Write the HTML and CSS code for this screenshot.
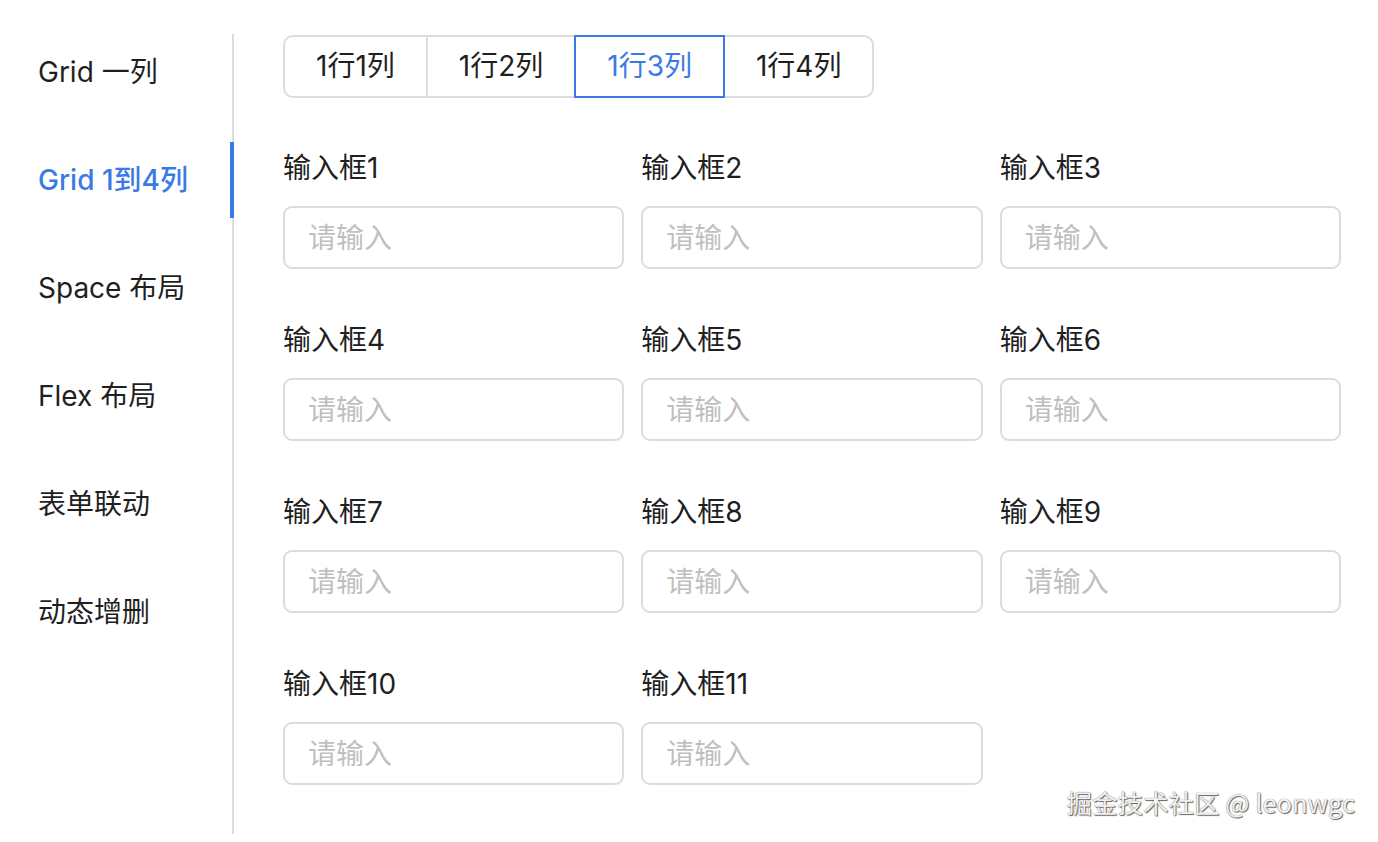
FILE: index.html
```html
<!DOCTYPE html>
<html lang="zh">
<head>
<meta charset="utf-8">
<title>Grid 1到4列</title>
<link rel="stylesheet" href="styles.css">
</head>
<body>
<div class="page">
  <nav class="sidebar">
    <div class="nav-item">Grid 一列</div>
    <div class="nav-item active">Grid 1到4列</div>
    <div class="nav-item">Space 布局</div>
    <div class="nav-item">Flex 布局</div>
    <div class="nav-item">表单联动</div>
    <div class="nav-item">动态增删</div>
  </nav>
  <main class="content">
    <div class="segmented">
      <div class="seg-btn">1行1列</div>
      <div class="seg-btn">1行2列</div>
      <div class="seg-btn active">1行3列</div>
      <div class="seg-btn">1行4列</div>
    </div>
    <div class="form-grid">
      <div class="field"><div class="label">输入框1</div><input class="input" placeholder="请输入"></div>
      <div class="field"><div class="label">输入框2</div><input class="input" placeholder="请输入"></div>
      <div class="field"><div class="label">输入框3</div><input class="input" placeholder="请输入"></div>
      <div class="field"><div class="label">输入框4</div><input class="input" placeholder="请输入"></div>
      <div class="field"><div class="label">输入框5</div><input class="input" placeholder="请输入"></div>
      <div class="field"><div class="label">输入框6</div><input class="input" placeholder="请输入"></div>
      <div class="field"><div class="label">输入框7</div><input class="input" placeholder="请输入"></div>
      <div class="field"><div class="label">输入框8</div><input class="input" placeholder="请输入"></div>
      <div class="field"><div class="label">输入框9</div><input class="input" placeholder="请输入"></div>
      <div class="field"><div class="label">输入框10</div><input class="input" placeholder="请输入"></div>
      <div class="field"><div class="label">输入框11</div><input class="input" placeholder="请输入"></div>
    </div>
  </main>
</div>
<div class="watermark">掘金技术社区 @ leonwgc</div>
</body>
</html>
```
FILE: styles.css
```css
* { box-sizing: border-box; }
html, body { margin: 0; padding: 0; background: #fff; }
body {
  font-family: Inter, "Noto Sans CJK SC", sans-serif;
  color: #1f1f1f;
  width: 1378px;
  height: 842px;
  overflow: hidden;
  position: relative;
}
.page { display: flex; align-items: flex-start; }
.sidebar {
  width: 234px;
  flex: none;
  margin-top: 34px;
  height: 800px;
  border-right: 2px solid #dcdcdc;
  display: flex;
  flex-direction: column;
  gap: 32px;
}
.nav-item {
  position: relative;
  height: 76px;
  line-height: 76px;
  padding-left: 38px;
  font-size: 28px;
  color: #1f1f1f;
}
.nav-item.active { color: #3b7ae6; font-weight: 500; }
.nav-item.active::after {
  content: "";
  position: absolute;
  right: -2px;
  top: 0;
  width: 4px;
  height: 76px;
  background: #3b7ae6;
}
.content {
  flex: 1;
  padding: 35px 37px 0 49px;
}
.segmented { display: flex; }
.seg-btn {
  position: relative;
  height: 63px;
  line-height: 59px;
  padding: 0 31px;
  border: 2px solid #dcdcdc;
  font-size: 28px;
  color: #1f1f1f;
  background: #fff;
}
.seg-btn + .seg-btn { margin-left: -2px; }
.seg-btn:first-child { border-radius: 10px 0 0 10px; }
.seg-btn:last-child { border-radius: 0 10px 10px 0; }
.seg-btn.active { border-color: #3b7ae6; color: #3b7ae6; z-index: 1; }
.form-grid {
  margin-top: 52px;
  display: grid;
  grid-template-columns: repeat(3, 1fr);
  column-gap: 17px;
  row-gap: 53px;
}
.field { display: flex; flex-direction: column; }
.label {
  height: 36px;
  line-height: 36px;
  font-size: 28px;
  color: #1f1f1f;
  margin-bottom: 20px;
}
.input {
  width: 100%;
  height: 63px;
  border: 2px solid #dcdcdc;
  border-radius: 9px;
  padding: 0 23px;
  font-family: Inter, "Noto Sans CJK SC", sans-serif;
  font-size: 28px;
  color: #1f1f1f;
  outline: none;
  background: #fff;
}
.input::placeholder { color: #bfbfbf; }
.watermark {
  position: absolute;
  right: 23px;
  top: 784px;
  font-family: "Noto Sans CJK SC", sans-serif;
  font-size: 25.5px;
  line-height: 36px;
  color: #f2f2f2;
  text-shadow: 0 0 1px #555, 1px 1px 1px #666;
}
```
